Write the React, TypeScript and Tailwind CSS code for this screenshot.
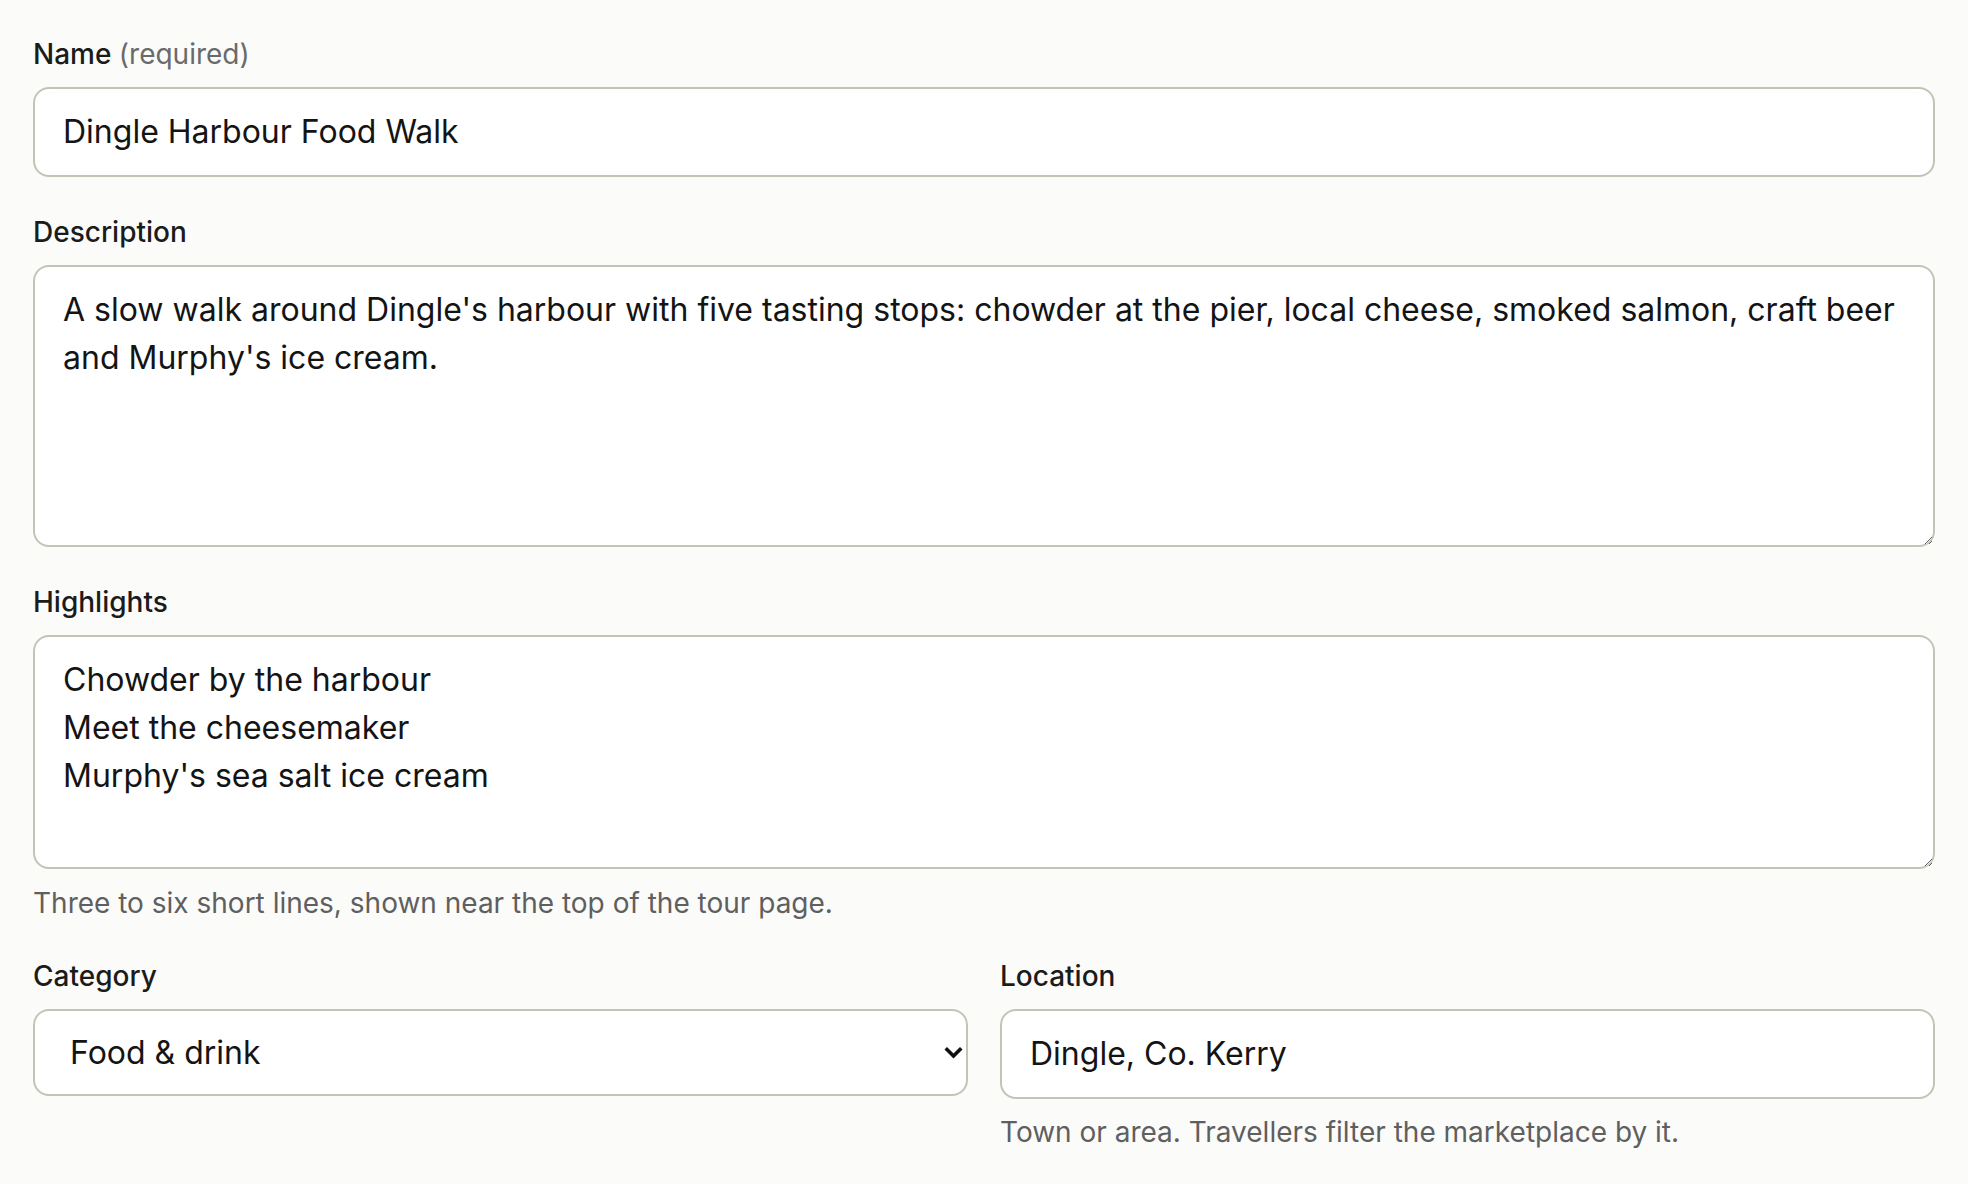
import React from 'react'

const fieldClass =
  'block w-full rounded-[16px] border-2 border-[#c3c3b6] bg-white px-[28px] py-[19px] text-[32px] leading-[48px] text-[#141414] outline-none'

function Label({ children }: { children: React.ReactNode }) {
  return (
    <label className="mb-[15px] block text-[28px] font-medium leading-[36px] text-[#1b1b1b]">
      {children}
    </label>
  )
}

function Hint({ children }: { children: React.ReactNode }) {
  return (
    <p className="mt-[15px] text-[28px] leading-[36px] text-[#5f5f5f]">{children}</p>
  )
}

export default function App() {
  return (
    <div
      className="min-h-screen bg-[#fbfbfa] px-[33px] pt-[36px] pb-10"
      style={{ fontFamily: 'Inter, "Noto Sans", sans-serif' }}
    >
      <div className="flex flex-col gap-[37px]">
        <div>
          <Label>
            Name <span className="font-normal text-[#6a6a6a]">(required)</span>
          </Label>
          <input
            type="text"
            className={fieldClass}
            defaultValue="Dingle Harbour Food Walk"
          />
        </div>

        <div>
          <Label>Description</Label>
          <textarea
            rows={5}
            className={`${fieldClass} resize-y`}
            defaultValue="A slow walk around Dingle's harbour with five tasting stops: chowder at the pier, local cheese, smoked salmon, craft beer and Murphy's ice cream."
          />
        </div>

        <div>
          <Label>Highlights</Label>
          <textarea
            rows={4}
            className={`${fieldClass} resize-y`}
            defaultValue={'Chowder by the harbour\nMeet the cheesemaker\nMurphy\'s sea salt ice cream'}
          />
          <p className="mt-[16px] text-[28px] leading-[36px] text-[#5f5f5f]">
            Three to six short lines, shown near the top of the tour page.
          </p>
        </div>

        <div className="grid grid-cols-2 gap-[32px]">
          <div>
            <Label>Category</Label>
            <div className="relative">
              <select
                defaultValue="food"
                className="block h-[87px] w-full appearance-none rounded-[16px] border-2 border-[#c3c3b6] bg-white pl-[35px] pr-[60px] text-[32px] text-[#141414] outline-none"
              >
                <option value="food">Food &amp; drink</option>
                <option value="walking">Walking</option>
                <option value="culture">Culture &amp; heritage</option>
              </select>
              <svg
                className="pointer-events-none absolute right-[5px] top-1/2 h-[13px] w-[19px] -translate-y-1/2"
                viewBox="0 0 19 13"
                fill="none"
              >
                <path
                  d="M3 3 L9.5 9.5 L16 3"
                  stroke="#111"
                  strokeWidth="3.6"
                  strokeLinecap="square"
                  strokeLinejoin="miter"
                />
              </svg>
            </div>
          </div>
          <div>
            <Label>Location</Label>
            <input
              type="text"
              className={fieldClass}
              defaultValue="Dingle, Co. Kerry"
            />
            <Hint>Town or area. Travellers filter the marketplace by it.</Hint>
          </div>
        </div>
      </div>
    </div>
  )
}
